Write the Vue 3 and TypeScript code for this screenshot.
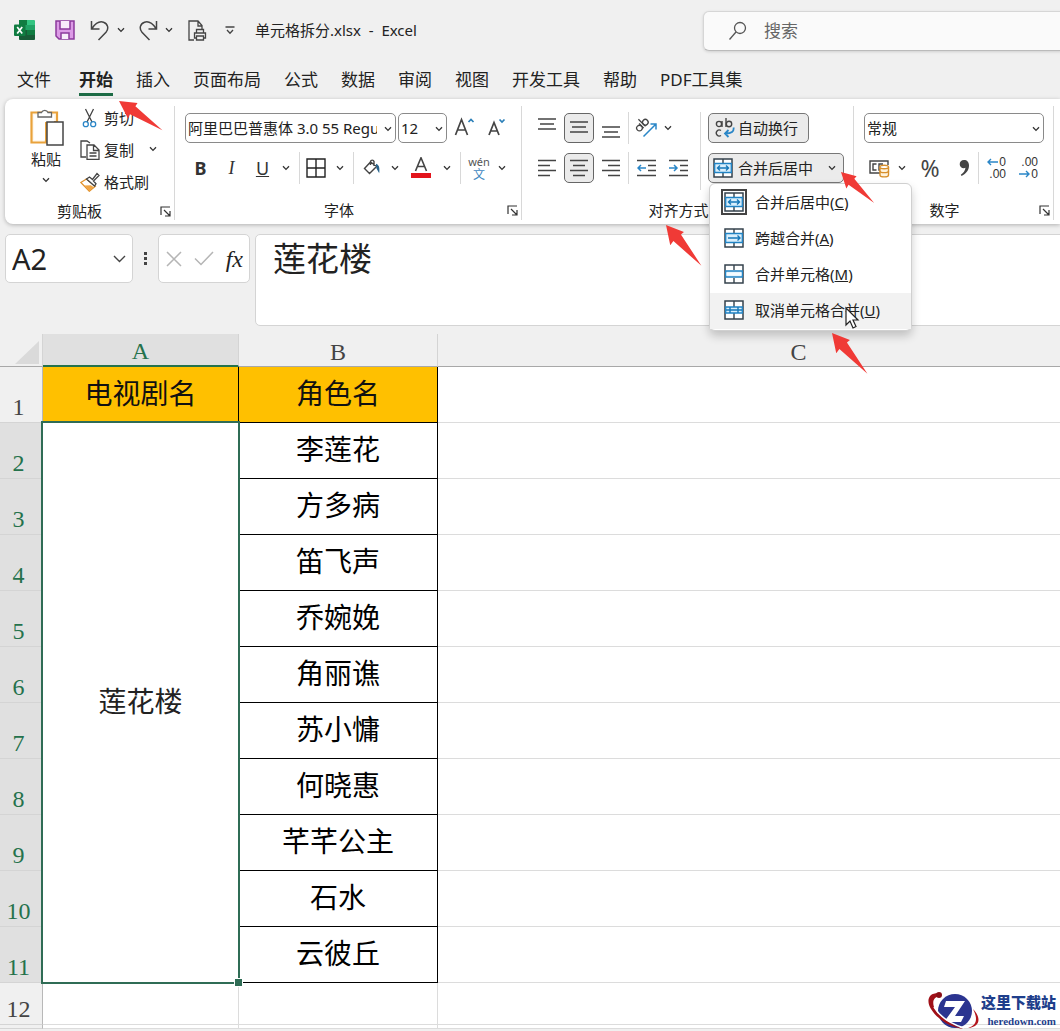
<script setup lang="ts">
import { h, ref } from 'vue'

type MergeKind = 'center' | 'across' | 'cells' | 'split'

interface MenuEntry {
  kind: MergeKind
  label: string
  key: string
}

interface Arrow {
  x: number
  y: number
  angle: number
  scale: number
}

const tabs: string[] = ['文件', '开始', '插入', '页面布局', '公式', '数据', '审阅', '视图', '开发工具', '帮助', 'PDF工具集']
const activeTab = ref('开始')

const mergeMenu: MenuEntry[] = [
  { kind: 'center', label: '合并后居中', key: 'C' },
  { kind: 'across', label: '跨越合并', key: 'A' },
  { kind: 'cells', label: '合并单元格', key: 'M' },
  { kind: 'split', label: '取消单元格合并', key: 'U' },
]
const hoveredKey = ref('U')

const roles: string[] = ['李莲花', '方多病', '笛飞声', '乔婉娩', '角丽谯', '苏小慵', '何晓惠', '芊芊公主', '石水', '云彼丘']

const arrows: Arrow[] = [
  { x: 119, y: 101, angle: 34, scale: 0.97 },
  { x: 841, y: 172, angle: 43, scale: 0.84 },
  { x: 666, y: 225, angle: 49, scale: 1 },
  { x: 832, y: 333, angle: 49, scale: 1 },
]

const nameBox = ref('A2')
const formula = ref('莲花楼')

const Chevron = () =>
  h('svg', { width: 8, height: 6, viewBox: '0 0 8 6', fill: 'none', stroke: '#333', 'stroke-width': 1.3 }, [
    h('path', { d: 'M1 1.2 4 4.4 7 1.2' }),
  ])

const Launcher = () =>
  h('svg', { width: 11, height: 11, viewBox: '0 0 11 11', fill: 'none', stroke: '#333', 'stroke-width': 1.2 }, [
    h('path', { d: 'M1 9V1h9M4 4l6 6M10 5v5H5' }),
  ])

const middleBand: Record<MergeKind, string> = {
  center: 'M4.5 10h11M7 7.5 4.5 10 7 12.5M13 7.5l2.5 2.5-2.5 2.5',
  across: 'M4 10h12M13.5 7.5 16 10l-2.5 2.5',
  cells: 'M2 10h16',
  split: 'M2 10h16M6 7v6M14 7v6',
}

const MergeIcon = (props: { kind: MergeKind }) => {
  const tall = props.kind === 'center' || props.kind === 'across'
  return h('svg', { width: 20, height: 20, viewBox: '0 0 20 20', fill: 'none' }, [
    h('rect', { x: 1, y: 1, width: 18, height: 18, fill: '#fff', stroke: '#34424c', 'stroke-width': 1.5 }),
    h('path', { d: props.kind === 'split' ? 'M10 1v18' : 'M10 1v5M10 14v5', stroke: '#34424c', 'stroke-width': 1.4 }),
    h('path', { d: tall ? 'M1.7 5.5h16.6v9H1.700z' : 'M1.7 7h16.600v6H1.700z', fill: '#d9effc', stroke: '#2083c4', 'stroke-width': 1.3 }),
    props.kind === 'cells'
      ? h('path', { d: 'M2.500 8.500h15v3h-15z', fill: '#f4fbff' })
      : h('path', { d: middleBand[props.kind], stroke: '#1678b8', 'stroke-width': 1.4 }),
  ])
}
MergeIcon.props = ['kind']
</script>

<template>
  <div class="app">
    <header class="titlebar">
      <div class="quick">
        <svg class="logo" width="21" height="20" viewBox="0 0 21 20">
          <rect x="5" y="0" width="16" height="20" rx="1.5" fill="#21a366" />
          <path d="M5 0h8v5H5z" fill="#107c41" />
          <path d="M13 0h6.5A1.5 1.5 0 0 1 21 1.500V5h-8z" fill="#33c481" />
          <path d="M5 10h16v8.500a1.500 1.500 0 0 1-1.500 1.500h-13A1.500 1.500 0 0 1 5 18.500z" fill="#185c37" />
          <path d="M13 10h8v5h-8z" fill="#107c41" />
          <rect x="0" y="4.500" width="11.500" height="11.500" rx="1" fill="#107c41" />
          <path d="M3.200 7l5 6.600M8.200 7l-5 6.600" stroke="#fff" stroke-width="1.700" />
        </svg>
        <button class="quick-btn save" aria-label="保存">
          <svg width="20" height="20" viewBox="0 0 20 20" fill="none" stroke="#8b3a9c" stroke-width="1.500">
            <path d="M1 1h18v18H4l-3-3z" fill="#dc9be6" />
            <path d="M5 1v8h10V1M6 19v-6h8v6" fill="#f8edfa" />
          </svg>
        </button>
        <button class="quick-btn undo" aria-label="撤消">
          <svg width="20" height="21" viewBox="0 0 20 21" fill="none" stroke="#444" stroke-width="1.500">
            <path d="M1.500 1v8h8M2 8.500C5 4 9 .8 13.500 2.200c4.500 1.500 5.500 6.500 2.500 10L8.500 20" />
          </svg>
        </button>
        <button class="quick-btn more" aria-label="撤消选项"><Chevron /></button>
        <button class="quick-btn redo" aria-label="恢复">
          <svg width="20" height="21" viewBox="0 0 20 21" fill="none" stroke="#444" stroke-width="1.500">
            <path d="M18.500 1v8h-8M18 8.500C15 4 11 .8 6.500 2.200 2 3.700 1 8.700 4 12.200l7.500 7.800" />
          </svg>
        </button>
        <button class="quick-btn more" aria-label="恢复选项"><Chevron /></button>
        <button class="quick-btn preview" aria-label="打印预览">
          <svg width="19" height="21" viewBox="0 0 19 21" fill="none" stroke="#444" stroke-width="1.300">
            <path d="M6 20H1V1h9l4 4.500V9M10 1v5h4" />
            <path d="M8.500 13V9.500h7V13M8.500 18H6.500v-5h11v5h-2M8.500 16h7v4h-7z" />
          </svg>
        </button>
        <button class="quick-btn custom" aria-label="自定义快速访问工具栏">
          <svg width="10" height="9" viewBox="0 0 10 9" fill="none" stroke="#444" stroke-width="1.300">
            <path d="M.5 1h9M2 4l3 3.300L8 4" />
          </svg>
        </button>
        <span class="doc-title">单元格拆分.xlsx&nbsp; -&nbsp; Excel</span>
      </div>
      <label class="search">
        <svg width="20" height="20" viewBox="0 0 20 20" fill="none" stroke="#555" stroke-width="1.300">
          <circle cx="12" cy="7" r="5.500" /><path d="M8 11l-6.500 7.500" />
        </svg>
        <input type="search" placeholder="搜索" aria-label="搜索" />
      </label>
    </header>

    <nav class="tabs">
      <button v-for="tab in tabs" :key="tab" class="tab" :class="{ active: tab === activeTab }" @click="activeTab = tab">{{ tab }}</button>
    </nav>

    <section class="ribbon">
      <div class="group">
        <div class="clipboard">
          <button class="paste">
            <svg width="36" height="39" viewBox="0 0 36 39" fill="none">
              <path d="M3.500 4.500v30H18V14h11V4.500z" fill="#fff8ec" stroke="#e9a23b" stroke-width="2.200" />
              <path d="M6 7v25h11V14h9V7z" fill="#fff" />
              <path d="M10 9V4.500h3.500a3.500 3.500 0 0 1 6.500 0h3.500V9z" fill="#fff" stroke="#666" stroke-width="1.300" />
              <rect x="19" y="14" width="16" height="23" fill="#fff" stroke="#444" stroke-width="1.500" />
            </svg>
            <span>粘贴</span>
            <Chevron />
          </button>
          <div class="clip-tools">
            <button class="tool">
              <svg width="20" height="20" viewBox="0 0 20 20" fill="none" stroke="#444" stroke-width="1.300">
                <path d="M5.500 1l6.500 13M13.500 1L7 14" />
                <circle cx="5.800" cy="16.200" r="2.500" stroke="#2a86c7" /><circle cx="13.200" cy="16.200" r="2.500" stroke="#2a86c7" />
              </svg>
              <span>剪切</span>
            </button>
            <div class="tool-row">
              <button class="tool">
                <svg width="20" height="20" viewBox="0 0 20 20" fill="none" stroke="#444" stroke-width="1.300">
                  <path d="M6 17H1V1h6l3 2" />
                  <path d="M7 5h7l5 5v9.300H7zM13.500 5v5.500H19M9.500 13h7M9.500 16h7" fill="#fff" />
                </svg>
                <span>复制</span>
              </button>
              <button class="chev" aria-label="复制选项"><Chevron /></button>
            </div>
            <button class="tool">
              <svg width="20" height="20" viewBox="0 0 20 20" fill="none" stroke-width="1.300">
                <path d="M6.500 7L.8 10.500l8.500 8.700 6-5z" fill="#fff" stroke="#e0902a" />
                <path d="M4 13.500l5.300 5.500 4.500-3.800-3-2z" fill="#f0a545" />
                <path d="M6.500 7l3-2 3 2.500L17 1.500l2 2-5.500 5.500 2.500 2.800-1.500 2.200z" fill="#fff" stroke="#444" />
              </svg>
              <span>格式刷</span>
            </button>
          </div>
        </div>
        <footer class="caption"><span>剪贴板</span><button aria-label="剪贴板设置"><Launcher /></button></footer>
      </div>

      <div class="group">
        <div class="rows">
          <div class="row spaced">
            <div class="select font-name">
              <select aria-label="字体"><option>阿里巴巴普惠体 3.0 55 Regular</option></select><Chevron />
            </div>
            <div class="select font-size">
              <select aria-label="字号"><option>12</option></select><Chevron />
            </div>
            <button class="icon" aria-label="增大字号">
              <svg width="22" height="22" viewBox="0 0 22 22" fill="none" stroke="#444" stroke-width="1.700">
                <path d="M2.500 18L8.500 2.500 14.500 18M4.500 13h8" /><path d="M15.500 5L18 2.500 20.500 5" stroke="#2a7fb8" />
              </svg>
            </button>
            <button class="icon" aria-label="减小字号">
              <svg width="22" height="22" viewBox="0 0 22 22" fill="none" stroke="#444" stroke-width="1.700">
                <path d="M4 18L9 5.500 14 18M5.500 14h7" /><path d="M14.500 2.500L17 5l2.500-2.500" stroke="#2a7fb8" />
              </svg>
            </button>
          </div>
          <div class="row">
            <button class="icon letter bold">B</button>
            <button class="icon letter italic">I</button>
            <button class="icon letter under">U</button>
            <button class="chev" aria-label="下划线选项"><Chevron /></button>
            <i class="sep wide"></i>
            <button class="icon slim" aria-label="边框">
              <svg width="20" height="20" viewBox="0 0 20 20" fill="none" stroke="#222" stroke-width="1.400"><path d="M1 1h18v18H1zM10 1v18M1 10h18" /></svg>
            </button>
            <button class="chev broad" aria-label="边框选项"><Chevron /></button>
            <i class="sep after"></i>
            <button class="icon" aria-label="填充颜色">
              <svg width="18" height="18" viewBox="0 0 18 18" fill="none" stroke="#444" stroke-width="1.400">
                <path d="M7.500 3L1.500 9.500l5 5 7-7zM7.500 6V2.500a1.800 1.800 0 0 1 3.500 0V7" />
                <path d="M13 5.500c2.500 1 3 3 2.700 6.500l-2-3.500" fill="#27638c" stroke="#27638c" />
              </svg>
            </button>
            <button class="chev" aria-label="填充选项"><Chevron /></button>
            <button class="icon font-color" aria-label="字体颜色">
              <svg width="20" height="22" viewBox="0 0 20 22" fill="none">
                <path d="M4.500 14L10 .800 15.500 14M6.500 9.500h7" stroke="#444" stroke-width="1.600" /><path d="M0 16h20v5H0z" fill="#e3141c" />
              </svg>
            </button>
            <button class="chev" aria-label="颜色选项"><Chevron /></button>
            <i class="sep wide"></i>
            <button class="icon pinyin" aria-label="拼音指南"><small>wén</small><b>文</b></button>
            <button class="chev end" aria-label="拼音选项"><Chevron /></button>
          </div>
        </div>
        <footer class="caption"><span>字体</span><button aria-label="字体设置"><Launcher /></button></footer>
      </div>

      <div class="group align-group">
        <div class="align">
          <div class="rows">
            <div class="row spaced">
              <button class="icon" aria-label="顶端对齐"><svg width="18" height="20" viewBox="0 0 18 20" stroke="#444" stroke-width="1.500"><path d="M0 1h18M2 6h14M0 11h18" /></svg></button>
              <button class="icon pressed" aria-label="垂直居中"><svg width="18" height="20" viewBox="0 0 18 20" stroke="#444" stroke-width="1.500"><path d="M0 4h18M2 9h14M0 14h18" /></svg></button>
              <button class="icon" aria-label="底端对齐"><svg width="18" height="20" viewBox="0 0 18 20" stroke="#444" stroke-width="1.500"><path d="M0 9h18M2 14h14M0 19h18" /></svg></button>
              <i class="sep"></i>
              <button class="icon" aria-label="方向">
                <svg width="22" height="22" viewBox="0 0 22 22" fill="none" stroke="#444" stroke-width="1.300">
                  <g transform="rotate(-45 8 9)"><circle cx="4" cy="8" r="2.800" /><path d="M7 4.500V11M9.500 1v10" /><circle cx="12.300" cy="8" r="2.800" /></g>
                  <path d="M8.500 19.500L20.500 7.500M15.500 7h5.500v5.500" stroke="#2a86c7" stroke-width="1.500" />
                </svg>
              </button>
              <button class="chev tight" aria-label="方向选项"><Chevron /></button>
            </div>
            <div class="row spaced">
              <button class="icon" aria-label="左对齐"><svg width="18" height="18" viewBox="0 0 18 18" stroke="#444" stroke-width="1.500"><path d="M0 1.500h18M0 6.500h12M0 11.500h18M0 16.500h12" /></svg></button>
              <button class="icon pressed" aria-label="居中"><svg width="18" height="18" viewBox="0 0 18 18" stroke="#444" stroke-width="1.500"><path d="M0 1.500h18M3 6.500h12M0 11.500h18M3 16.500h12" /></svg></button>
              <button class="icon" aria-label="右对齐"><svg width="18" height="18" viewBox="0 0 18 18" stroke="#444" stroke-width="1.500"><path d="M0 1.500h18M6 6.500h12M0 11.500h18M6 16.500h12" /></svg></button>
              <i class="sep"></i>
              <button class="icon" aria-label="减少缩进"><svg width="19" height="18" viewBox="0 0 19 18" fill="none" stroke="#444" stroke-width="1.500"><path d="M0 1.500h19M11 6.500h8M11 11.500h8M0 16.500h19" /><path d="M9 9H1M4 6L1 9l3 3" stroke="#2a86c7" /></svg></button>
              <button class="icon" aria-label="增加缩进"><svg width="19" height="18" viewBox="0 0 19 18" fill="none" stroke="#444" stroke-width="1.500"><path d="M0 1.500h19M11 6.500h8M11 11.500h8M0 16.500h19" /><path d="M0 9h8M5 6l3 3-3 3" stroke="#2a86c7" /></svg></button>
            </div>
          </div>
          <i class="sep tall"></i>
          <div class="rows">
            <button class="wrap-btn">
              <svg width="20" height="20" viewBox="0 0 20 20" fill="none" stroke="#444" stroke-width="1.400">
                <circle cx="4" cy="6" r="2.600" /><path d="M7 3v6M11 0v9" /><circle cx="14" cy="6" r="2.700" />
                <path d="M6 12.500a3 3 0 1 0 0 5" /><path d="M18.500 9.500c.8 4-2 6-8 6M13.500 12l-3.500 3.500 3.500 3.500" stroke="#2a86c7" stroke-width="1.800" />
              </svg>
              <span>自动换行</span>
            </button>
            <div class="merge">
              <button class="merge-btn" aria-haspopup="menu" aria-expanded="true">
                <MergeIcon kind="center" /><span>合并后居中</span><Chevron />
              </button>
              <div class="menu" role="menu">
                <button v-for="entry in mergeMenu" :key="entry.key" role="menuitem" class="menu-item"
                  :class="{ hovered: entry.key === hoveredKey, current: entry.kind === 'center' }" @mouseenter="hoveredKey = entry.key">
                  <MergeIcon class="menu-icon" :kind="entry.kind" /><span>{{ entry.label }}(<u>{{ entry.key }}</u>)</span>
                </button>
              </div>
            </div>
          </div>
        </div>
        <footer class="caption"><span>对齐方式</span><button aria-label="对齐设置"><Launcher /></button></footer>
      </div>

      <div class="group">
        <div class="rows">
          <div class="row">
            <div class="select format">
              <select aria-label="数字格式"><option>常规</option></select><Chevron />
            </div>
          </div>
          <div class="row spaced">
            <button class="icon" aria-label="会计数字格式">
              <svg width="21" height="20" viewBox="0 0 21 20" fill="none" stroke="#444" stroke-width="1.400">
                <path d="M11 15H1V3h18v4M7.500 6H4v6h3.500M11 12h-1V6h4" />
                <path d="M11 9v8c0 2.500 8.500 2.500 8.500 0V9" fill="#fff3dd" stroke="#d8902c" />
                <ellipse cx="15.200" cy="9" rx="4.300" ry="1.800" fill="#fff" stroke="#d8902c" /><path d="M11 13c0 2.200 8.500 2.200 8.500 0" stroke="#d8902c" />
              </svg>
            </button>
            <button class="chev small" aria-label="会计选项"><Chevron /></button>
            <button class="icon percent">%</button>
            <button class="icon comma" aria-label="千位分隔">
              <svg width="11" height="18" viewBox="0 0 11 18" fill="#444"><path d="M5 1C2.300 1 .7 2.800.7 5.200c0 2.300 1.700 4 4 4 .7 0 1.300-.1 1.800-.4-.4 3-2 5.300-4.700 6.900l.8 1.400C7.300 14.500 10 11 10 6.500 10 3 8 1 5 1z" /></svg>
            </button>
            <i class="sep"></i>
            <button class="icon decimals" aria-label="增加小数位数">
              <span><svg width="11" height="8" viewBox="0 0 11 8" fill="none" stroke="#2a86c7" stroke-width="1.400"><path d="M11 4H1M4 1L1 4l3 3" /></svg>0</span><span>.00</span>
            </button>
            <button class="icon decimals" aria-label="减少小数位数">
              <span>.00</span><span><svg width="11" height="8" viewBox="0 0 11 8" fill="none" stroke="#2a86c7" stroke-width="1.400"><path d="M0 4h10M7 1l3 3-3 3" /></svg>0</span>
            </button>
          </div>
        </div>
        <footer class="caption"><span>数字</span><button aria-label="数字设置"><Launcher /></button></footer>
      </div>
    </section>

    <section class="formula-bar">
      <div class="name-box">
        <input v-model="nameBox" aria-label="名称框" />
        <svg width="13" height="8" viewBox="0 0 13 8" fill="none" stroke="#444" stroke-width="1.400"><path d="M1 1l5.500 5.500L12 1" /></svg>
      </div>
      <svg class="dots" width="4" height="14" viewBox="0 0 4 14" fill="#444"><path d="M0 0h3v3H0zM0 5h3v3H0zM0 10h3v3H0z" /></svg>
      <div class="fx-box">
        <button aria-label="取消"><svg width="16" height="16" viewBox="0 0 16 16" fill="none" stroke="#b5b5b5" stroke-width="1.500"><path d="M1 1l14 14M15 1L1 15" /></svg></button>
        <button aria-label="输入"><svg width="20" height="15" viewBox="0 0 20 15" fill="none" stroke="#b5b5b5" stroke-width="1.500"><path d="M1 7.500L7 13.500 19 1" /></svg></button>
        <button class="fx">fx</button>
      </div>
      <textarea v-model="formula" class="formula" aria-label="编辑栏"></textarea>
    </section>

    <table class="sheet">
      <colgroup><col class="col-head" /><col class="col-a" /><col class="col-b" /><col /></colgroup>
      <thead>
        <tr>
          <th class="corner"><svg width="26" height="24" viewBox="0 0 26 24"><path d="M24 0v23H0z" fill="#dadada" /></svg></th>
          <th class="selected">A</th>
          <th>B</th>
          <th>C</th>
        </tr>
      </thead>
      <tbody>
        <tr>
          <th>1</th>
          <td class="title">电视剧名</td>
          <td class="title">角色名</td>
          <td></td>
        </tr>
        <tr v-for="(role, index) in roles" :key="role">
          <th class="selected">{{ index + 2 }}</th>
          <td v-if="index === 0" class="merged" :rowspan="roles.length">莲花楼</td>
          <td class="role">{{ role }}</td>
          <td></td>
        </tr>
        <tr class="short"><th>12</th><td></td><td></td><td></td></tr>
        <tr class="sliver"><th></th><td></td><td></td><td></td></tr>
      </tbody>
    </table>

    <svg class="annotations" width="1060" height="400" viewBox="0 0 1060 400">
      <path v-for="arrow in arrows" :key="`${arrow.x}-${arrow.y}`" d="M0 0L17-9 17-5 54 0 17 5 18 10z" fill="#f03a36"
        :transform="`translate(${arrow.x} ${arrow.y}) rotate(${arrow.angle}) scale(${arrow.scale})`" />
      <path d="M846 308v17l4-4 3 7 3-1.500-3-6.500h5z" fill="#fff" stroke="#222" stroke-width="1.200" />
    </svg>

    <aside class="brand">
      <svg width="54" height="38" viewBox="0 0 54 38">
        <circle cx="28" cy="19" r="17" fill="#2b3490" />
        <path d="M19 9h19L28 24h9l-3 6H17l11-15h-11z" fill="#fff" />
        <path d="M13 1C1 0-1 9 4 17c6 10 20 19 33 20C24 33 11 24 7 15 5 9 7 5 13 4z" fill="#a01018" />
        <circle cx="12" cy="3" r="3" fill="#8c1018" />
        <path d="M46 17c8 8 8 18-5 19 9-3 10-9 5-19z" fill="#b3151c" />
        <path d="M7 15c6 10 17 17 30 21" fill="none" stroke="#fff" stroke-width="1.500" />
      </svg>
      <div class="brand-text"><strong>这里下载站</strong><span>heredown.com</span></div>
    </aside>
  </div>
</template>

<style>
body {
  background: #f0f0f0;
}
</style>

<style scoped>
.app {
  position: relative;
  height: 100vh;
  overflow: hidden;
  background: #f0f0f0;
  color: #222;
  font: 15px/20px "Noto Sans", "Noto Sans CJK SC", sans-serif;
}
* {
  box-sizing: border-box;
}
svg {
  display: block;
  flex: none;
}
button {
  display: flex;
  align-items: center;
  justify-content: center;
  padding: 0;
  border: 0;
  background: none;
  color: inherit;
  font: inherit;
  white-space: nowrap;
}
input,
select,
textarea {
  margin: 0;
  border: 0;
  outline: 0;
  background: none;
  color: inherit;
  font: inherit;
}

/* title bar */
.titlebar {
  display: flex;
  height: 60px;
}
.quick {
  display: flex;
  flex: 1;
  align-items: center;
  min-width: 0;
  padding-left: 14px;
}
.save { width: 20px; margin-left: 20px; }
.undo { width: 20px; margin-left: 15px; }
.redo { width: 20px; margin-left: 9px; }
.more { width: 16px; margin-left: 3px; }
.preview { width: 20px; margin-left: 10px; }
.custom { width: 12px; margin-left: 17px; }
.doc-title {
  margin-left: 19px;
  white-space: pre;
}
.search {
  display: flex;
  flex: 0 0 364px;
  align-items: center;
  gap: 16px;
  height: 40px;
  margin: 11px -7px 0 0;
  padding-left: 24px;
  border: 1px solid #d6d6d6;
  border-bottom-color: #bbb;
  border-radius: 6px;
  background: #fafafa;
  box-shadow: 0 1px 3px #0002;
  font-size: 17px;
}
.search input {
  flex: 1;
  min-width: 0;
  padding: 0;
}
.search input::placeholder {
  color: #666;
}

/* ribbon tabs */
.tabs {
  display: flex;
  gap: 23px;
  height: 39px;
  padding-left: 17px;
  font-size: 17px;
}
.tab {
  height: 36px;
  padding-top: 7px;
  border-bottom: 3px solid transparent;
}
.tab:first-child {
  margin-right: 5px;
}
.tab.active {
  border-color: #1d6b45;
  font-weight: 700;
}

/* ribbon */
.ribbon {
  display: flex;
  position: relative;
  z-index: 2;
  margin-left: 5px;
  padding-top: 3px;
  border-radius: 8px 0 0 8px;
  background: #fff;
  box-shadow: 0 1px 4px #0004;
}
.group {
  display: flex;
  flex-direction: column;
  justify-content: space-between;
  height: 122px;
  padding: 0 10px;
  background: linear-gradient(#d8d8d8, #d8d8d8) right 4px / 1px 114px no-repeat;
}
.group:first-child {
  padding: 0 0 0 16px;
}
.caption {
  display: flex;
  height: 28px;
  margin-right: -6px;
  align-items: center;
}
.caption span {
  flex: 1;
  text-align: center;
}
.caption button {
  width: 11px;
  margin-left: 14px;
}
.group:first-child .caption {
  margin: 0 4px 0 -8px;
}
.clipboard {
  display: flex;
  gap: 6px;
}
.paste {
  flex-direction: column;
  justify-content: flex-start;
  width: 50px;
  padding-top: 6px;
}
.paste span {
  margin: 2px 0 8px;
}
.clip-tools {
  display: flex;
  flex-direction: column;
  width: 98px;
}
.tool {
  justify-content: flex-start;
  gap: 4px;
  height: 32px;
  padding-left: 3px;
}
.tool-row {
  display: flex;
  gap: 11px;
}
.rows {
  display: flex;
  flex-direction: column;
  align-items: flex-start;
  gap: 10px;
  padding-top: 11px;
}
.row {
  display: flex;
  align-items: center;
  height: 30px;
}
.spaced {
  gap: 2px;
}
.select {
  position: relative;
  height: 30px;
  border: 1px solid #8a8a8a;
  border-radius: 5px;
}
.select select {
  width: 100%;
  height: 28px;
  padding: 0 18px 0 2px;
  appearance: none;
}
.select svg {
  position: absolute;
  top: 12px;
  right: 3px;
}
.font-name { width: 211px; }
.font-size { width: 49px; }
.format { width: 180px; }
.icon {
  width: 30px;
  height: 30px;
}
.icon.slim {
  width: 22px;
}
.icon.font-color {
  width: 36px;
}
.pressed {
  border: 1px solid #666;
  border-radius: 5px;
  background: #ebebeb;
}
.letter {
  width: 31px;
  color: #333;
  font-size: 18px;
}
.bold { font-weight: 700; }
.italic { font-family: "Liberation Serif", serif; font-style: italic; }
.under { text-decoration: underline; }
.chev {
  width: 16px;
  height: 30px;
}
.chev.broad { width: 26px; }
.chev.end { width: 20px; }
.chev.small { width: 12px; }
.chev.tight { width: 10px; }
.sep {
  width: 1px;
  height: 32px;
  background: #d8d8d8;
}
.sep.wide {
  margin: 0 5px;
}
.sep.after {
  margin-right: 3px;
}
.pinyin {
  flex-direction: column;
  width: 26px;
  color: #555;
}
.pinyin small {
  font-size: 11px;
  line-height: 14px;
}
.pinyin b {
  color: #3f87c0;
  font-size: 12px;
  font-weight: 400;
  line-height: 12px;
}
.align {
  display: flex;
}
.sep.tall {
  height: 78px;
  margin: 10px 7px 0;
}
.wrap-btn,
.merge-btn {
  height: 30px;
  border: 1px solid #777;
  border-radius: 5px;
  background: #ebebeb;
}
.wrap-btn {
  gap: 3px;
  padding: 0 10px 0 6px;
}
.merge-btn {
  gap: 5px;
  padding: 0 7px 0 4px;
}
.merge-btn span {
  margin-right: 10px;
}
.merge {
  position: relative;
}
.menu {
  position: absolute;
  top: 30px;
  left: 1px;
  width: 203px;
  padding: 1px 0;
  border: 1px solid #d0d0d0;
  border-radius: 6px;
  background: #fff;
  box-shadow: 0 5px 10px #0003;
}
.menu-item {
  justify-content: flex-start;
  gap: 11px;
  width: 100%;
  height: 36px;
  padding: 0 0 3px 14px;
}
.menu-item.hovered {
  background: #f2f2f2;
}
.current .menu-icon {
  outline: 2px solid #444;
  outline-offset: 1px;
}
.percent {
  width: 40px;
  color: #444;
  font-size: 23px;
}
.comma {
  width: 24px;
}
.decimals {
  flex-direction: column;
  align-items: flex-end;
  padding-right: 5px;
  color: #333;
  font: 12px/12px "Liberation Sans", sans-serif;
}
.decimals span {
  display: flex;
  align-items: center;
  gap: 1px;
}

/* formula bar */
.formula-bar {
  display: flex;
  align-items: flex-start;
  height: 110px;
  padding: 10px 0 0 5px;
}
.name-box,
.fx-box,
.formula {
  border: 1px solid #d4d4d4;
  border-radius: 5px;
  background: #fff;
}
.name-box {
  display: flex;
  align-items: center;
  width: 128px;
  height: 49px;
  padding: 0 6px;
}
.name-box input {
  flex: 1;
  min-width: 0;
  padding: 0;
  font-size: 29px;
  line-height: 40px;
}
.dots {
  margin: 18px 10px 0 11px;
}
.fx-box {
  display: flex;
  align-items: center;
  justify-content: space-between;
  width: 92px;
  height: 49px;
  margin-right: 5px;
  padding: 0 6px 0 7px;
}
.fx {
  font: italic 24px/30px "Liberation Serif", serif;
}
.formula {
  flex: 1;
  height: 92px;
  margin-right: -6px;
  padding: 0 17px;
  font-size: 33px;
  line-height: 48px;
  resize: none;
}

/* worksheet: the last column runs past the window's right edge */
.sheet {
  width: calc(100% + 99px);
  border-spacing: 0;
  table-layout: fixed;
  background: #fff;
  font-size: 28px;
  line-height: 40px;
}
.col-head { width: 43px; }
.col-a { width: 196px; }
.col-b { width: 199px; }
.sheet th {
  padding: 0;
  border-right: 1px solid #b8b8b8;
  border-bottom: 1px solid #d4d4d4;
  background: #f0f0f0;
  color: #444;
  font: 24px/30px "Liberation Serif", serif;
}
.sheet thead th {
  height: 33px;
  padding-top: 3px;
  border-bottom-color: #a8a8a8;
  border-right-color: #d4d4d4;
  line-height: 28px;
}
.sheet thead th:last-child {
  border-right: 0;
}
.sheet thead th.selected {
  border-bottom: 2px solid #25724c;
}
.sheet th.selected {
  background: #e0e0e0;
  color: #25724c;
}
.sheet .corner svg {
  margin: 2px 0 0 15px;
}
.sheet tbody th {
  padding-right: 5px;
  vertical-align: bottom;
}
.sheet td {
  height: 56px;
  padding: 0 0 4px;
  border-right: 1px solid #dcdcdc;
  border-bottom: 1px solid #dcdcdc;
  text-align: center;
}
.sheet td:last-child {
  border-right: 0;
}
.sheet .title {
  border-color: #000;
  background: #ffc000;
  color: #111;
}
.sheet .role {
  border-color: #000;
  color: #000;
}
.sheet .merged {
  position: relative;
}
.merged::before {
  position: absolute;
  inset: -2px;
  border: 2px solid #2f6c55;
  content: "";
}
.merged::after {
  position: absolute;
  right: -5px;
  bottom: -5px;
  width: 7px;
  height: 7px;
  border: 1px solid #fff;
  background: #2f6c55;
  content: "";
}
.sheet .short td {
  height: 42px;
}
.sheet .sliver td {
  height: 4px;
  padding: 0;
}

/* overlays */
.annotations {
  position: absolute;
  z-index: 3;
  top: 0;
  left: 0;
  pointer-events: none;
}
.brand {
  display: flex;
  position: absolute;
  right: 4px;
  bottom: 1px;
  color: #1f3f8c;
  font-family: "Liberation Serif", "Noto Sans CJK SC", serif;
}
.brand-text {
  display: flex;
  flex-direction: column;
  align-items: flex-end;
  font-size: 11px;
  font-weight: 700;
  line-height: 14px;
}
.brand-text strong {
  font-size: 15px;
  line-height: 22px;
}
</style>
